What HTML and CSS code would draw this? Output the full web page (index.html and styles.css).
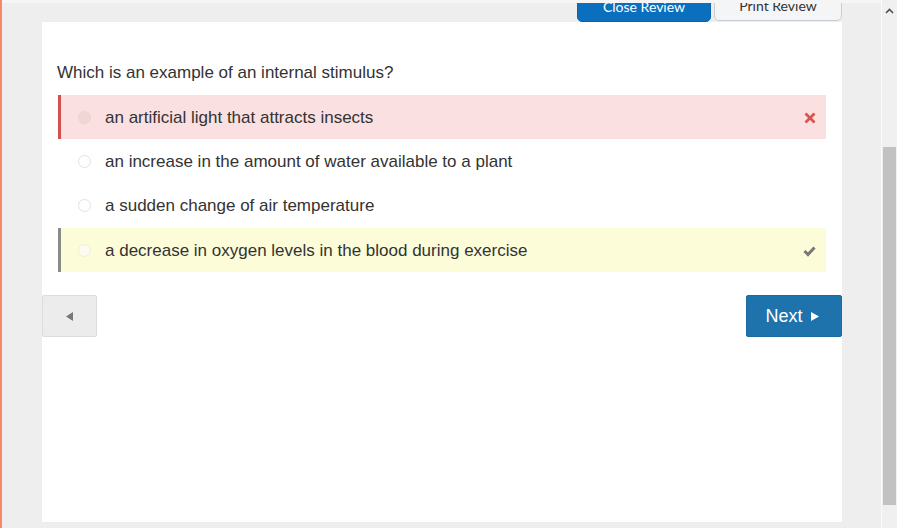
FILE: index.html
```html
<!DOCTYPE html>
<html>
<head>
<meta charset="utf-8">
<link rel="stylesheet" href="styles.css">
</head>
<body>
<div class="page">
  <div class="stripe"></div>
  <div class="content">
    <div class="toolbar">
      <button class="btn-close">Close Review</button>
      <button class="btn-print">Print Review</button>
    </div>
    <div class="card">
      <p class="question">Which is an example of an internal stimulus?</p>
      <div class="options">
        <div class="option wrong">
          <span class="radio"></span>
          <span class="label">an artificial light that attracts insects</span>
          <svg class="mark" width="12" height="12" viewBox="0 0 12 12"><path d="M1.5 1.5 L10.5 10.5 M10.5 1.5 L1.5 10.5" stroke="#d9534f" stroke-width="2.8" stroke-linecap="butt"/></svg>
        </div>
        <div class="option">
          <span class="radio"></span>
          <span class="label">an increase in the amount of water available to a plant</span>
        </div>
        <div class="option">
          <span class="radio"></span>
          <span class="label">a sudden change of air temperature</span>
        </div>
        <div class="option correct">
          <span class="radio"></span>
          <span class="label">a decrease in oxygen levels in the blood during exercise</span>
          <svg class="mark" width="13" height="12" viewBox="0 0 13 12"><path d="M1.5 6 L5 9.5 L11.5 2.5" fill="none" stroke="#777" stroke-width="3" stroke-linecap="butt" stroke-linejoin="miter"/></svg>
        </div>
      </div>
      <div class="nav">
        <button class="btn-back"><svg width="8" height="9" viewBox="0 0 8 9"><path d="M7 0 L7 9 L0 4.5 Z" fill="#777"/></svg></button>
        <button class="btn-next">Next <svg width="8" height="9" viewBox="0 0 8 9"><path d="M0 0 L0 9 L8 4.5 Z" fill="#fff"/></svg></button>
      </div>
    </div>
  </div>
  <div class="scrollbar">
    <div class="arrow"><svg width="9" height="6" viewBox="0 0 9 6"><path d="M1 5 L4.5 1.5 L8 5" fill="none" stroke="#505050" stroke-width="1.6"/></svg></div>
    <div class="track"><div class="thumb"></div></div>
  </div>
</div>
</body>
</html>
```
FILE: styles.css
```css
html, body {
  margin: 0;
  padding: 0;
  height: 100%;
  overflow: hidden;
}
body {
  background: #eeeeee;
  font-family: Arial, "Liberation Sans", sans-serif;
}
.page {
  display: flex;
  height: 528px;
}
.stripe {
  width: 2px;
  background: #f5876a;
  flex: none;
}
.content {
  flex: 1;
  padding-left: 40px;
  border-top: 3px solid #f5f5f5;
}
.toolbar {
  width: 800px;
  height: 19px;
  display: flex;
  justify-content: flex-end;
  align-items: flex-end;
  gap: 3px;
  overflow: hidden;
}
.toolbar button {
  font-family: Lato, "Liberation Sans", sans-serif;
  font-size: 14px;
  height: 40px;
  margin-bottom: 0;
  border-radius: 0 0 5px 5px;
  padding: 0;
  flex: none;
  line-height: 1;
  padding-top: 9px;
}
.btn-close {
  width: 134px;
  background: #0b6fc0;
  color: #fff;
  border: 1px solid #0a64ad;
}
.btn-print {
  width: 128px;
  background: #f4f5f7;
  color: #333;
  border: 1px solid #c9ccd1;
  height: 39px !important;
  align-self: flex-end;
  margin-bottom: 1px !important;
}
.card {
  width: 800px;
  height: 500px;
  background: #fff;
  box-sizing: border-box;
}
.question {
  margin: 0;
  padding: 41px 0 0 15px;
  font-size: 17px;
  color: #333;
  line-height: 19px;
  height: 32px;
}
.options {
  margin: 0 16px 0 16px;
}
.option {
  height: 44px;
  display: flex;
  align-items: center;
  border-left: 3px solid transparent;
  box-sizing: border-box;
  font-size: 17px;
  color: #333;
  padding-top: 1px;
}
.option.wrong {
  background: #fae0e0;
  border-left-color: #d2514f;
}
.option.correct {
  background: #fcfcd9;
  border-left-color: #8a8a86;
  margin-top: 1px;
}
.radio {
  width: 11px;
  height: 11px;
  border: 1px solid #e2e2e2;
  border-radius: 50%;
  background: #fff;
  margin-left: 17px;
  flex: none;
}
.wrong .radio {
  background: #f1d6d6;
  border-color: #efd2d2;
}
.correct .radio {
  background: #fbfbef;
  border-color: #efefd9;
}
.label {
  margin-left: 14px;
  flex: 1;
}
.mark {
  margin-right: 10px;
}
.nav {
  display: flex;
  justify-content: space-between;
  margin-top: 23px;
}
.nav button {
  height: 42px;
  border-radius: 2px;
  padding: 0;
  cursor: pointer;
}
.btn-back {
  width: 55px;
  background: #ececec;
  border: 1px solid #dcdcdc;
}
.btn-next {
  width: 96px;
  background: #1f73ad;
  border: 1px solid #1c6aa0;
  color: #fff;
  font-family: Arial, "Liberation Sans", sans-serif;
  font-size: 18px;
  display: flex;
  align-items: center;
  justify-content: center;
  gap: 8px;
  padding-right: 4px !important;
}
.scrollbar {
  width: 15px;
  flex: none;
  background: #f0f0f0;
  border-left: 1px solid #fafafa;
  display: flex;
  flex-direction: column;
}
.arrow {
  height: 21px;
  display: flex;
  justify-content: center;
  align-items: center;
  padding-bottom: 2px;
}
.track {
  flex: 1;
  padding: 124px 1px 23px 1px;
  display: flex;
}
.thumb {
  flex: 1;
  background: #c2c2c2;
}
```
